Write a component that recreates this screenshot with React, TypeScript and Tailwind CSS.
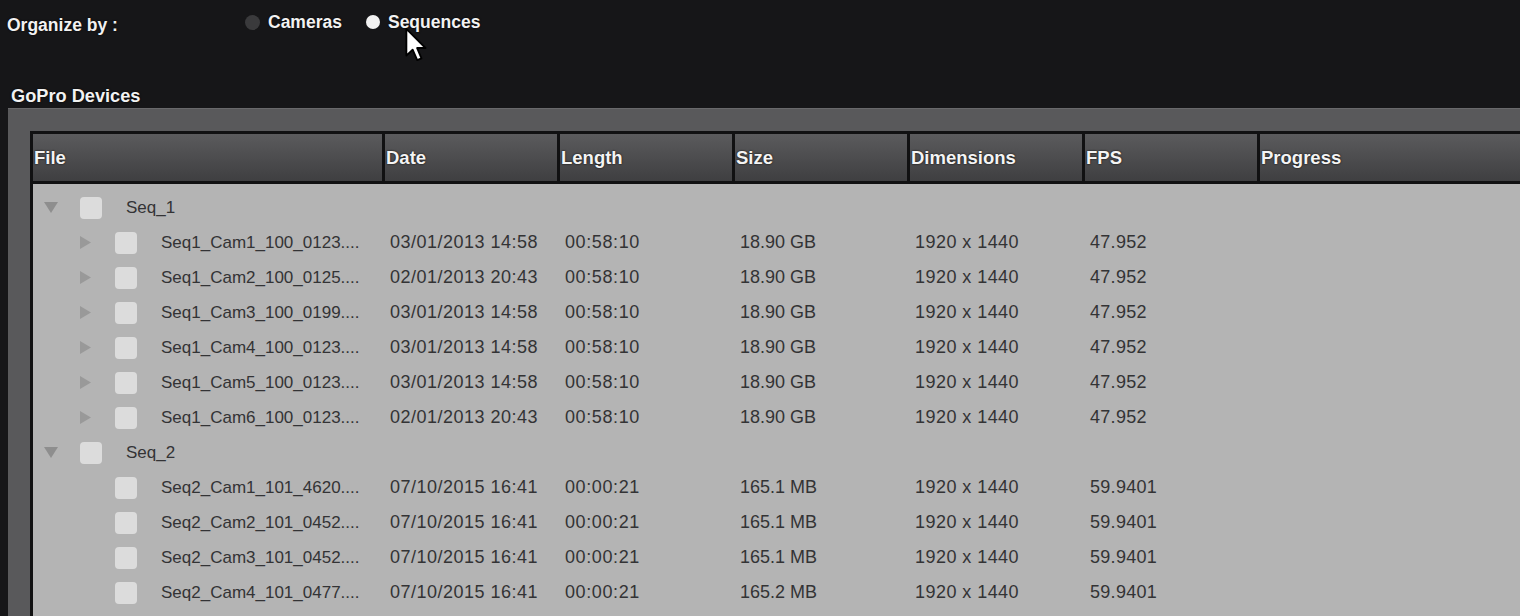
import React from "react";

type Row = {
  kind: "seq" | "cam";
  name: string;
  date?: string;
  length?: string;
  size?: string;
  dims?: string;
  fps?: string;
  expandable?: boolean;
};

const rows: Row[] = [
  { kind: "seq", name: "Seq_1" },
  { kind: "cam", expandable: true, name: "Seq1_Cam1_100_0123....", date: "03/01/2013 14:58", length: "00:58:10", size: "18.90 GB", dims: "1920 x 1440", fps: "47.952" },
  { kind: "cam", expandable: true, name: "Seq1_Cam2_100_0125....", date: "02/01/2013 20:43", length: "00:58:10", size: "18.90 GB", dims: "1920 x 1440", fps: "47.952" },
  { kind: "cam", expandable: true, name: "Seq1_Cam3_100_0199....", date: "03/01/2013 14:58", length: "00:58:10", size: "18.90 GB", dims: "1920 x 1440", fps: "47.952" },
  { kind: "cam", expandable: true, name: "Seq1_Cam4_100_0123....", date: "03/01/2013 14:58", length: "00:58:10", size: "18.90 GB", dims: "1920 x 1440", fps: "47.952" },
  { kind: "cam", expandable: true, name: "Seq1_Cam5_100_0123....", date: "03/01/2013 14:58", length: "00:58:10", size: "18.90 GB", dims: "1920 x 1440", fps: "47.952" },
  { kind: "cam", expandable: true, name: "Seq1_Cam6_100_0123....", date: "02/01/2013 20:43", length: "00:58:10", size: "18.90 GB", dims: "1920 x 1440", fps: "47.952" },
  { kind: "seq", name: "Seq_2" },
  { kind: "cam", name: "Seq2_Cam1_101_4620....", date: "07/10/2015 16:41", length: "00:00:21", size: "165.1 MB", dims: "1920 x 1440", fps: "59.9401" },
  { kind: "cam", name: "Seq2_Cam2_101_0452....", date: "07/10/2015 16:41", length: "00:00:21", size: "165.1 MB", dims: "1920 x 1440", fps: "59.9401" },
  { kind: "cam", name: "Seq2_Cam3_101_0452....", date: "07/10/2015 16:41", length: "00:00:21", size: "165.1 MB", dims: "1920 x 1440", fps: "59.9401" },
  { kind: "cam", name: "Seq2_Cam4_101_0477....", date: "07/10/2015 16:41", length: "00:00:21", size: "165.2 MB", dims: "1920 x 1440", fps: "59.9401" },
];

const headers = ["File", "Date", "Length", "Size", "Dimensions", "FPS", "Progress"];

function TriDown() {
  return (
    <svg width="14" height="11" viewBox="0 0 14 11" className="shrink-0">
      <path d="M0 0 L14 0 L7 11 Z" fill="#8e8e8e" />
    </svg>
  );
}

function TriRight() {
  return (
    <svg width="11" height="13" viewBox="0 0 11 13" className="shrink-0">
      <path d="M0 0 L11 6.5 L0 13 Z" fill="#999999" />
    </svg>
  );
}

function Check() {
  return <div className="w-[22px] h-[22px] rounded-[4px] bg-[#dcdcdc] shrink-0" />;
}

function Cursor() {
  return (
    <svg width="25" height="35" viewBox="0 0 13 19" className="absolute left-[404px] top-[27px]">
      <path
        d="M1 1 L1 15.5 L4.4 12.3 L6.9 18 L9.2 17 L6.8 11.4 L11.4 11.4 Z"
        fill="#ffffff"
        stroke="#000000"
        strokeWidth="1"
        strokeLinejoin="round"
      />
    </svg>
  );
}

export default function App() {
  return (
    <div
      className="relative w-[1520px] h-[616px] overflow-hidden bg-[#161618] text-[#f2f2f2]"
      style={{ fontFamily: '"Liberation Sans", Arial, sans-serif' }}
    >
      {/* Top bar */}
      <div className="flex items-start h-[86px]">
        <div className="w-[245px] pl-[7px] pt-[15px] text-[17.5px] leading-[20px] font-bold [text-shadow:0_0_2px_#000]">
          Organize by :
        </div>
        <div className="flex items-center pt-[12px] h-[32px] text-[17.5px] leading-[20px] font-bold [text-shadow:0_0_2px_#000]">
          <div className="w-[15px] h-[15px] rounded-full bg-[#3a3a3c]" />
          <span className="ml-[8px]">Cameras</span>
          <div className="ml-[24px] w-[14px] h-[14px] rounded-full bg-[#f2f2f2]" />
          <span className="ml-[8px]">Sequences</span>
        </div>
      </div>

      {/* Title */}
      <div className="h-[22px] pl-[11px] text-[18.2px] leading-[20px] font-bold [text-shadow:0_0_2px_#000]">
        GoPro Devices
      </div>

      {/* Panel */}
      <div className="ml-[8px] h-[600px] bg-[#59595b] border-t border-[#69696b] pl-[22px] pt-[22px]">
        <div className="h-full border-l-[3px] border-t-[3px] border-[#111112] bg-[#b4b4b4]">
          {/* Header */}
          <div className="grid grid-cols-[349px_175px_175px_175px_175px_175px_1fr] h-[50px] border-b-[3px] border-[#111112] bg-gradient-to-b from-[#5b5b5d] to-[#3f3f41]">
            {headers.map((h, i) => (
              <div
                key={h}
                className={
                  "flex items-center text-[18.5px] font-bold text-[#f4f4f4] [text-shadow:0_0_2px_#000] " +
                  (i === 0 ? "pl-[1px]" : "border-l-[3px] border-[#111112] pl-[1px]")
                }
              >
                {h}
              </div>
            ))}
          </div>

          {/* Body */}
          <div className="pt-[6px] text-[#333335] text-[18px]">
            {rows.map((r, idx) => (
              <div
                key={idx}
                className="grid grid-cols-[349px_175px_175px_175px_175px_175px_1fr] h-[35px] items-center"
              >
                {r.kind === "seq" ? (
                  <div className="flex items-center">
                    <div className="w-[14px] ml-[11px] flex items-center">
                      <TriDown />
                    </div>
                    <div className="ml-[22px]">
                      <Check />
                    </div>
                    <span className="ml-[24px] text-[17px]">{r.name}</span>
                  </div>
                ) : (
                  <div className="flex items-center">
                    <div className="w-[11px] ml-[47px] flex items-center">
                      {r.expandable ? <TriRight /> : null}
                    </div>
                    <div className="ml-[24px]">
                      <Check />
                    </div>
                    <span className="ml-[24px] text-[17px]">{r.name}</span>
                  </div>
                )}
                <div className="pl-[8px] tracking-[0.5px]">{r.date}</div>
                <div className="pl-[8px] tracking-[0.6px]">{r.length}</div>
                <div className="pl-[8px]">{r.size}</div>
                <div className="pl-[8px] tracking-[0.45px]">{r.dims}</div>
                <div className="pl-[8px] tracking-[0.3px]">{r.fps}</div>
                <div />
              </div>
            ))}
            <div className="grid grid-cols-[349px_175px_175px_175px_175px_175px_1fr] h-[35px] items-center">
              <div className="flex items-center">
                <div className="w-[11px] ml-[47px]" />
                <div className="ml-[24px]">
                  <Check />
                </div>
              </div>
            </div>
          </div>
        </div>
      </div>

      <Cursor />
    </div>
  );
}
